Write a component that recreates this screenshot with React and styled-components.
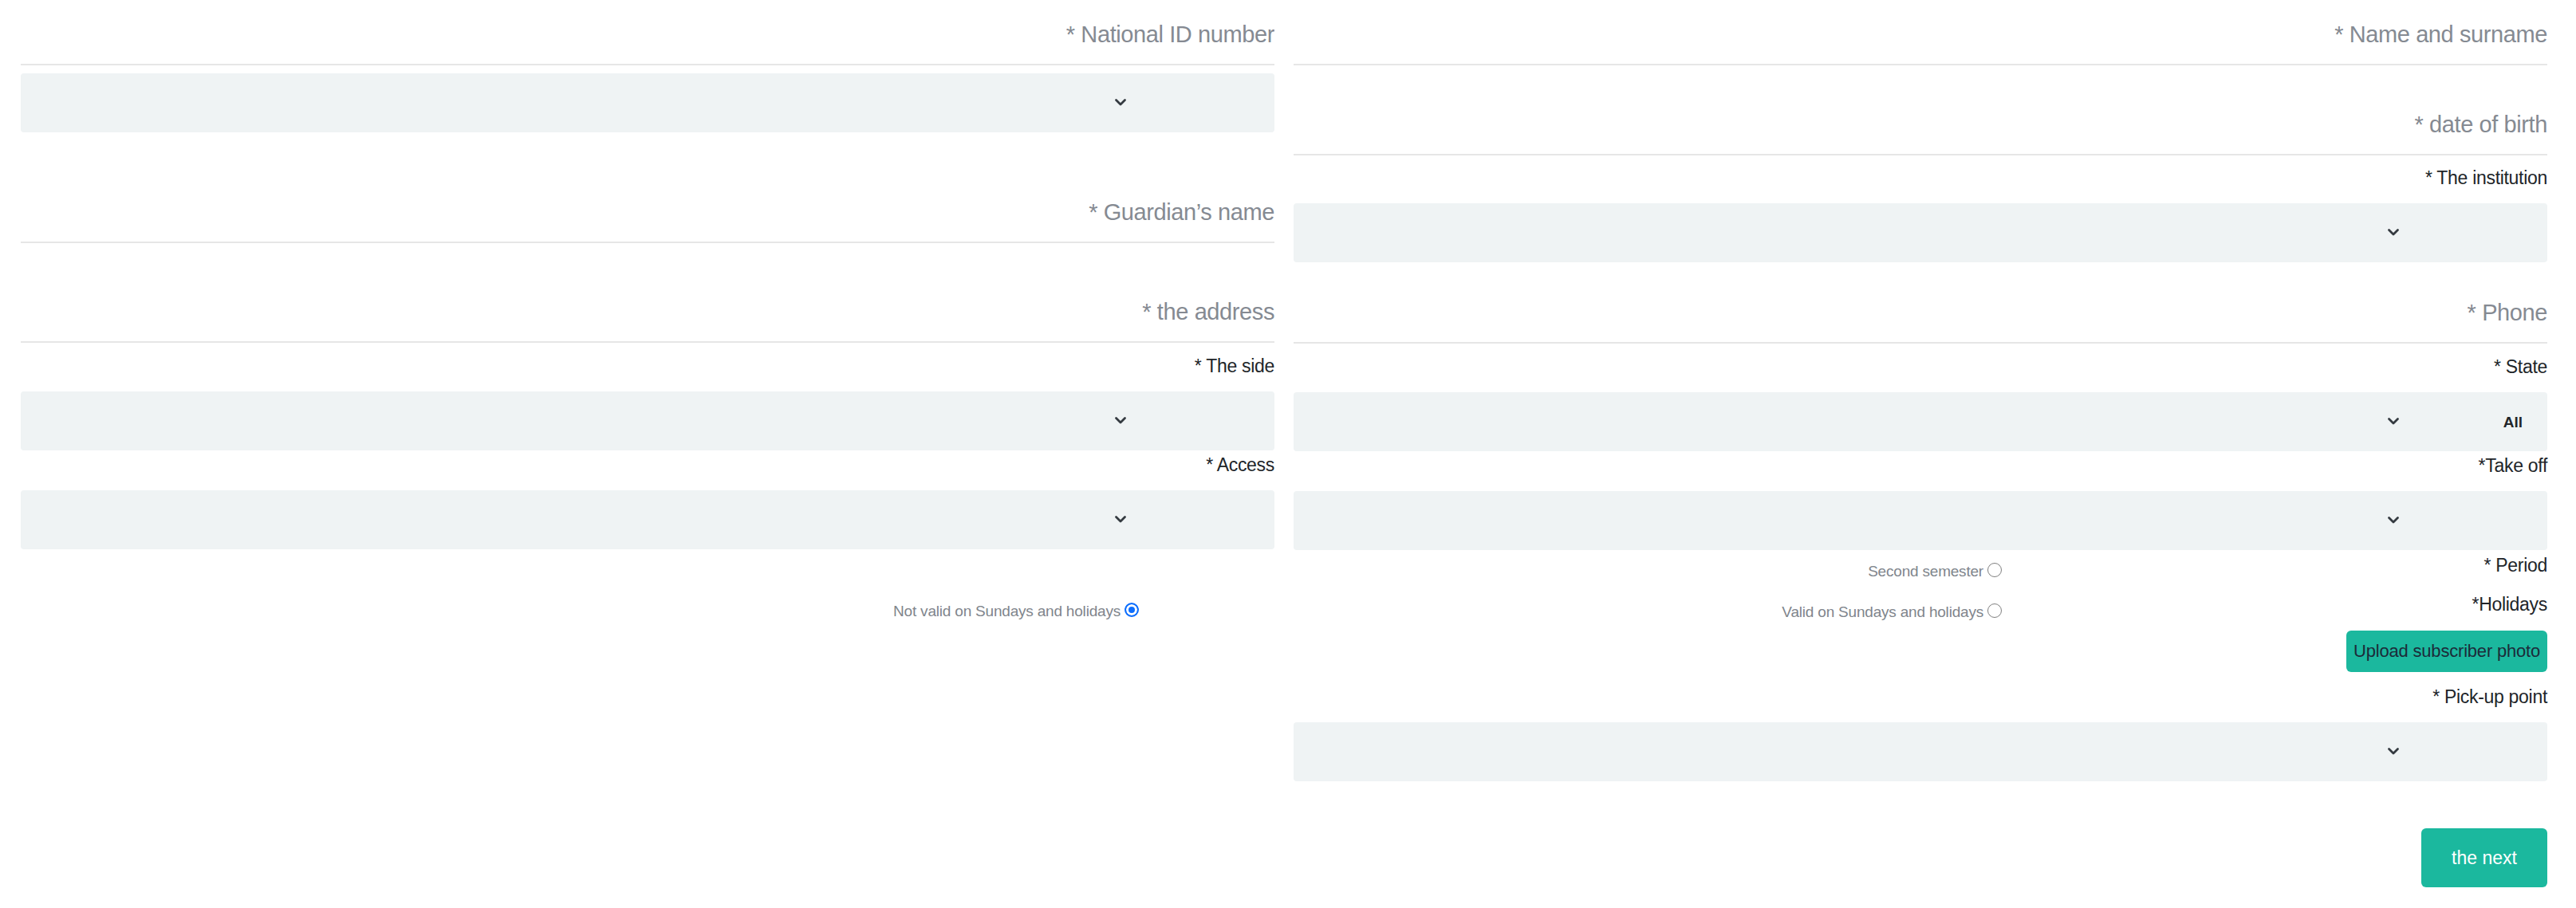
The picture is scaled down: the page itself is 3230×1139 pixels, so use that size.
import React from "react";
import styled, { createGlobalStyle } from "styled-components";

const GlobalStyle = createGlobalStyle`
  body {
    margin: 0;
    background: #ffffff;
    font-family: "Liberation Sans", Arial, sans-serif;
    color: #212529;
  }
  * { box-sizing: border-box; }
`;

function Chevron() {
  return (
    <Arrow viewBox="0 0 16 16" aria-hidden="true">
      <path d="m2.5 5.5 5.5 5.5 5.5-5.5" fill="none" stroke="#343a40" strokeWidth="2.8" strokeLinecap="round" strokeLinejoin="round" />
    </Arrow>
  );
}

function SelectBox({ value, top }) {
  return (
    <SelectWrap $top={top}>
      <Select defaultValue={value || ""}>
        <option value={value || ""}>{value || ""}</option>
      </Select>
      <Chevron />
    </SelectWrap>
  );
}

function Radio({ label, checked, name, top }) {
  return (
    <Option $top={top}>
      <span>{label}</span>
      <RadioInput type="radio" name={name} defaultChecked={checked} />
    </Option>
  );
}

export default function App() {
  return (
    <>
      <GlobalStyle />
      <Page>
        <Column>
          <TextInput placeholder="* National ID number" />
          <SelectBox top={10} />
          <TextInput $top={57} placeholder="* Guardian’s name" />
          <TextInput $top={43} placeholder="* the address" />
          <Label $top={14}>* The side</Label>
          <SelectBox />
          <Label $top={3}>* Access</Label>
          <SelectBox />
          <RadioRow>
            <Radio name="holidays" label="Not valid on Sundays and holidays" checked />
          </RadioRow>
        </Column>

        <Column>
          <TextInput placeholder="* Name and surname" />
          <TextInput $top={31} placeholder="* date of birth" />
          <Label $top={13}>* The institution</Label>
          <SelectBox />
          <TextInput $top={20} placeholder="* Phone" />
          <Label $top={14}>* State</Label>
          <SelectBox value="All" />
          <Label $top={3}>*Take off</Label>
          <SelectBox />
          <ChoiceRow $top={3}>
            <Radio name="period" label="Second semester" />
            <Label $top={1} $bottom={17}>* Period</Label>
          </ChoiceRow>
          <ChoiceRow>
            <Radio name="holidays" label="Valid on Sundays and holidays" top={10} />
            <Label $top={1} $bottom={17}>*Holidays</Label>
          </ChoiceRow>
          <UploadButton type="button">Upload subscriber photo</UploadButton>
          <Label $top={16}>* Pick-up point</Label>
          <SelectBox />
          <NextButton type="button">the next</NextButton>
        </Column>
      </Page>
    </>
  );
}

const Page = styled.form`
  display: grid;
  grid-template-columns: 1572px 1572px;
  column-gap: 24px;
  align-items: start;
  padding: 0 36px 0 26px;
`;

const Column = styled.div`
  display: flex;
  flex-direction: column;
`;

const TextInput = styled.input`
  display: block;
  width: 100%;
  height: 82px;
  margin: ${(p) => p.$top || 0}px 0 0;
  padding: 26px 0 20px;
  border: none;
  border-bottom: 2px solid #e6e6e6;
  background: transparent;
  font-family: inherit;
  font-size: 29px;
  line-height: 34px;
  letter-spacing: -0.4px;
  text-align: right;
  color: #495057;
  outline: none;

  &::placeholder {
    color: #858a92;
    opacity: 1;
  }
`;

const Label = styled.label`
  display: block;
  margin: ${(p) => p.$top || 0}px 0 ${(p) => p.$bottom ?? 16}px;
  font-size: 23px;
  line-height: 31px;
  letter-spacing: -0.3px;
  text-align: right;
  color: #212529;
  justify-self: end;
`;

const SelectWrap = styled.div`
  position: relative;
  margin-top: ${(p) => p.$top || 0}px;
`;

const Select = styled.select`
  display: block;
  width: 100%;
  height: 74px;
  padding: 0 31px 0 12px;
  border: none;
  border-radius: 4px;
  background: #eff3f4;
  appearance: none;
  direction: rtl;
  font-family: inherit;
  font-size: 19px;
  font-weight: 700;
  color: #212529;
  outline: none;
`;

const Arrow = styled.svg`
  position: absolute;
  right: 185px;
  top: 50%;
  width: 16px;
  height: 16px;
  margin-top: -9px;
  pointer-events: none;
`;

const RadioRow = styled.div`
  display: flex;
  justify-content: flex-end;
  margin-top: 54px;
  padding-right: 170px;
`;

const ChoiceRow = styled.div`
  display: grid;
  grid-template-columns: 1fr 684px;
  align-items: start;
  margin-top: ${(p) => p.$top || 0}px;
`;

const Option = styled.label`
  display: flex;
  align-items: center;
  justify-self: end;
  gap: 5px;
  margin-top: ${(p) => p.$top ?? 8}px;
  font-size: 19px;
  line-height: 31px;
  letter-spacing: -0.2px;
  color: #80858c;
`;

const RadioInput = styled.input`
  appearance: none;
  width: 18px;
  height: 18px;
  margin: 0 0 4px;
  border: 1.5px solid #808080;
  border-radius: 50%;
  background: #fff;

  &:checked {
    border: 2px solid #0d6efd;
    background: #0d6efd;
    box-shadow: inset 0 0 0 3px #fff;
  }
`;

const UploadButton = styled.button`
  align-self: flex-end;
  height: 52px;
  margin-top: 0;
  padding: 0 9px;
  border: none;
  border-radius: 6px;
  background: #1bb89e;
  font-family: inherit;
  font-size: 22px;
  letter-spacing: -0.2px;
  color: #1c2b39;
  cursor: pointer;
`;

const NextButton = styled.button`
  align-self: flex-end;
  width: 158px;
  height: 74px;
  margin-top: 59px;
  border: none;
  border-radius: 6px;
  background: #1bb89e;
  font-family: inherit;
  font-size: 23px;
  color: #ffffff;
  cursor: pointer;
`;
